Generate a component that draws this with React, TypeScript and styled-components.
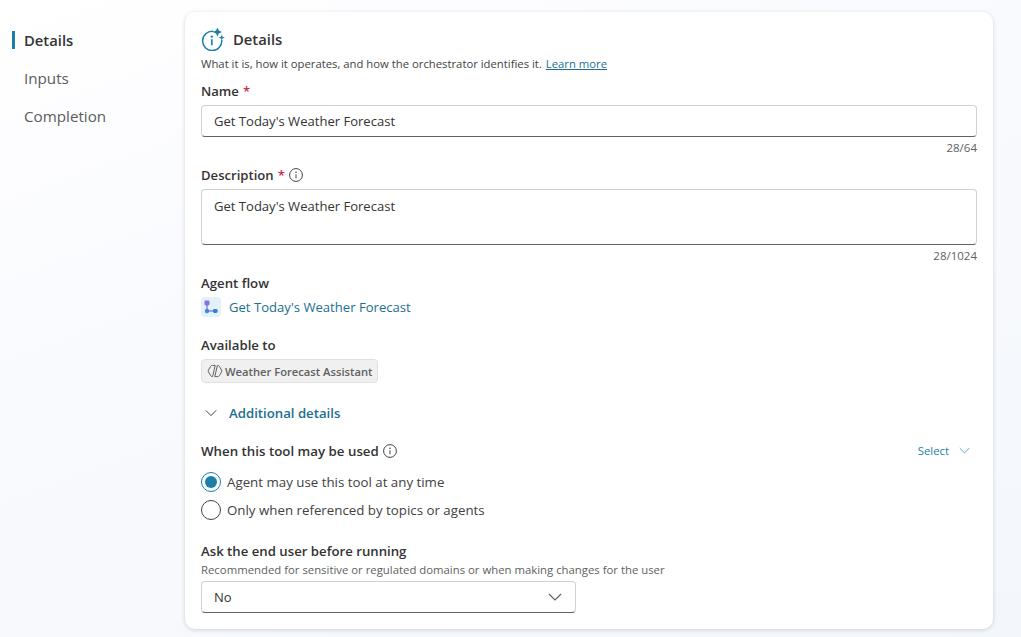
import { FC, ReactNode } from "react";
import styled, { createGlobalStyle } from "styled-components";

const GlobalStyle = createGlobalStyle`
	html, body {
		margin: 0;
		height: 100%;
	}
	body {
		font-family: "Open Sans", "Noto Sans", sans-serif;
		color: #242424;
		overflow: hidden;
	}
`;

const ChevronDown: FC<{ size?: number; color?: string }> = ({ size = 12, color = "#424242" }) => (
	<svg width={size} height={size} viewBox="0 0 12 12" fill="none">
		<path d="M0.8 3.4 L6 8.6 L11.2 3.4" stroke={color} strokeWidth="1" />
	</svg>
);

const InfoIcon: FC = () => (
	<svg width="14" height="14" viewBox="0 0 14 14" fill="none">
		<circle cx="7" cy="7" r="6.4" stroke="#424242" strokeWidth="1" />
		<circle cx="7" cy="4.3" r="0.8" fill="#424242" />
		<path d="M7 6.3 V10.2" stroke="#424242" strokeWidth="1" />
	</svg>
);

const SparkInfoIcon: FC = () => (
	<svg width="24" height="24" viewBox="0 0 24 24" fill="none">
		<path
			d="M12 4.4 A9.6 9.6 0 1 0 20.8 13.4"
			stroke="#1f7fa8"
			strokeWidth="1.5"
			strokeLinecap="round"
		/>
		<circle cx="10.8" cy="9.6" r="1.2" fill="#1f7fa8" />
		<path d="M10.8 12.2 V18.2" stroke="#1f7fa8" strokeWidth="1.7" />
		<path d="M16.4 0.4 L17.8 3.6 L21 5 L17.8 6.4 L16.4 9.6 L15 6.4 L11.8 5 L15 3.6 Z" fill="#1f7fa8" />
		<path d="M20.8 7.6 L21.6 9.7 L23.8 10.6 L21.6 11.4 L20.8 13.6 L20 11.4 L17.8 10.6 L20 9.7 Z" fill="#1f7fa8" />
	</svg>
);

const FlowIcon: FC = () => (
	<svg width="20" height="20" viewBox="0 0 20 20" fill="none">
		<rect width="20" height="20" rx="4" fill="#e3f1fb" />
		<path d="M6 6 V14 H14" stroke="#6d8ee6" strokeWidth="1.4" />
		<rect x="3.5" y="3.5" width="5" height="5" rx="1.4" fill="#8e6fe0" />
		<circle cx="6" cy="14" r="2.2" fill="#4a82e0" />
		<rect x="12" y="12" width="4.6" height="4" rx="1.4" fill="#3a78d8" />
	</svg>
);

const AgentIcon: FC = () => (
	<svg width="16" height="16" viewBox="0 0 16 16" fill="none">
		<path
			d="M8.2 2.4 H5.4 Q4.2 2.4 3.6 3.4 L1.4 7.2 Q1 8 1.4 8.8 L3.6 12.6 Q4.2 13.6 5.4 13.6 H5.6 Z"
			stroke="#616161"
			strokeWidth="1"
		/>
		<path
			d="M7.8 13.6 H10.6 Q11.8 13.6 12.4 12.6 L14.6 8.8 Q15 8 14.6 7.2 L12.4 3.4 Q11.8 2.4 10.6 2.4 H10.4 Z"
			stroke="#616161"
			strokeWidth="1"
		/>
	</svg>
);

const Field: FC<{ label: string; required?: boolean; info?: boolean; counter: string; children: ReactNode }> = ({
	label,
	required,
	info,
	counter,
	children,
}) => (
	<>
		<SLabel>
			{label}
			{required && <SRequired>*</SRequired>}
			{info && <InfoIcon />}
		</SLabel>
		{children}
		<SCounter>{counter}</SCounter>
	</>
);

const Radio: FC<{ checked?: boolean; children: ReactNode }> = ({ checked, children }) => (
	<SRadioRow>
		<SRadioCircle $checked={checked}>{checked && <SRadioDot />}</SRadioCircle>
		{children}
	</SRadioRow>
);

export default function App() {
	return (
		<SPage>
			<GlobalStyle />
			<SNav>
				<SNavItem $active>Details</SNavItem>
				<SNavItem>Inputs</SNavItem>
				<SNavItem>Completion</SNavItem>
			</SNav>
			<SCard>
				<SCardTitle>
					<SparkInfoIcon />
					Details
				</SCardTitle>
				<SCardSubtitle>
					What it is, how it operates, and how the orchestrator identifies it. <SLearnMore>Learn more</SLearnMore>
				</SCardSubtitle>

				<Field label="Name" required counter="28/64">
					<SInput>Get Today's Weather Forecast</SInput>
				</Field>

				<Field label="Description" required info counter="28/1024">
					<STextarea>Get Today's Weather Forecast</STextarea>
				</Field>

				<SSectionLabel>Agent flow</SSectionLabel>
				<SFlowLink>
					<FlowIcon />
					Get Today's Weather Forecast
				</SFlowLink>

				<SAvailableLabel>Available to</SAvailableLabel>
				<STag>
					<AgentIcon />
					Weather Forecast Assistant
				</STag>

				<SAccordion>
					<SAccordionIcon>
						<ChevronDown />
					</SAccordionIcon>
					Additional details
				</SAccordion>

				<SWhenRow>
					<SWhenLabel>
						When this tool may be used
						<InfoIcon />
					</SWhenLabel>
					<SSelectLink>
						Select
						<ChevronDown size={11} color="#5a9fc0" />
					</SSelectLink>
				</SWhenRow>
				<SRadioGroup>
					<Radio checked>Agent may use this tool at any time</Radio>
					<Radio>Only when referenced by topics or agents</Radio>
				</SRadioGroup>

				<SAskLabel>Ask the end user before running</SAskLabel>
				<SHint>Recommended for sensitive or regulated domains or when making changes for the user</SHint>
				<SDropdown>
					No
					<SDropdownIcon>
						<ChevronDown size={14} color="#616161" />
					</SDropdownIcon>
				</SDropdown>
			</SCard>
		</SPage>
	);
}

const SPage = styled.div`
	display: flex;
	align-items: flex-start;
	box-sizing: border-box;
	width: 1021px;
	height: 637px;
	padding-top: 12px;
	overflow: hidden;
	background: linear-gradient(160deg, #ffffff 0%, #f9fafe 40%, #f3f7fb 100%);
`;

const SNav = styled.nav`
	display: flex;
	flex-direction: column;
	gap: 10px;
	flex: none;
	width: 185px;
	padding: 14px 0 0 12px;
	box-sizing: border-box;
`;

const SNavItem = styled.div<{ $active?: boolean }>`
	display: flex;
	align-items: center;
	height: 28px;
	padding-left: ${({ $active }) => ($active ? "9px" : "12px")};
	border-left: ${({ $active }) => ($active ? "3px solid #1b7fa9" : "none")};
	font-size: ${({ $active }) => ($active ? "14.8px" : "15.2px")};
	font-weight: ${({ $active }) => ($active ? 600 : 400)};
	color: ${({ $active }) => ($active ? "#333333" : "#5c5c5c")};
	${({ $active }) => $active && "height: 18px; margin: 5px 0;"}
`;

const SCard = styled.main`
	flex: none;
	box-sizing: border-box;
	width: 808px;
	height: 617px;
	padding: 15px 16px 0;
	background: #ffffff;
	border-radius: 10px;
	box-shadow: 0 1px 4px rgba(0, 0, 0, 0.16);
`;

const SCardTitle = styled.div`
	display: flex;
	align-items: center;
	gap: 8px;
	height: 24px;
	font-size: 14.8px;
	line-height: 22px;
	font-weight: 600;
	color: #333333;
`;

const SCardSubtitle = styled.div`
	margin-top: 5px;
	font-size: 11.3px;
	line-height: 16px;
	color: #424242;
`;

const SLearnMore = styled.span`
	margin-left: 1px;
	color: #1b6f8f;
	text-decoration: underline;
`;

const SLabel = styled.div`
	display: flex;
	align-items: center;
	height: 20px;
	margin-top: 9px;
	font-size: 13.1px;
	font-weight: 600;
	color: #333333;

	svg {
		margin-left: 4px;
	}
`;

const SRequired = styled.span`
	margin-left: 4px;
	color: #c4314b;
	font-weight: 600;
`;

const SInput = styled.div`
	box-sizing: border-box;
	display: flex;
	align-items: center;
	height: 32px;
	margin-top: 4px;
	padding: 0 12px;
	background: #ffffff;
	border: 1px solid #d1d1d1;
	border-bottom-color: #616161;
	border-radius: 4px;
	font-size: 13.05px;
	color: #333333;
`;

const STextarea = styled(SInput)`
	align-items: flex-start;
	height: 56px;
	padding-top: 6px;
	line-height: 20px;
`;

const SCounter = styled.div`
	margin-top: 3px;
	height: 16px;
	text-align: right;
	font-size: 11.5px;
	line-height: 16px;
	color: #616161;
`;

const SSectionLabel = styled.div`
	margin-top: 9px;
	height: 20px;
	font-size: 13.2px;
	line-height: 20px;
	font-weight: 600;
	color: #333333;
`;

const SAvailableLabel = styled(SSectionLabel)`
	margin-top: 18px;
`;

const SFlowLink = styled.div`
	display: flex;
	align-items: center;
	gap: 8px;
	height: 20px;
	margin-top: 4px;
	font-size: 13.1px;
	color: #1b6f8f;
`;

const STag = styled.div`
	display: inline-flex;
	align-items: center;
	gap: 2px;
	box-sizing: border-box;
	height: 24px;
	margin-top: 4px;
	padding: 0 5px;
	background: #f0f0f0;
	border: 1px solid #e0e0e0;
	border-radius: 4px;
	font-size: 11.2px;
	font-weight: 600;
	color: #616161;
`;

const SAccordion = styled.div`
	display: flex;
	align-items: center;
	height: 20px;
	margin-top: 19px;
	font-size: 13.2px;
	font-weight: 600;
	color: #1b6f8f;
`;

const SAccordionIcon = styled.span`
	display: flex;
	width: 28px;
	padding-left: 4px;
	box-sizing: border-box;
`;

const SWhenRow = styled.div`
	display: flex;
	align-items: center;
	justify-content: space-between;
	height: 20px;
	margin-top: 18px;
`;

const SWhenLabel = styled.div`
	display: flex;
	align-items: center;
	gap: 4px;
	font-size: 13.3px;
	font-weight: 600;
	color: #333333;
`;

const SSelectLink = styled.div`
	display: flex;
	align-items: center;
	gap: 10px;
	padding-right: 7px;
	margin-top: -2px;
	font-size: 11.3px;
	color: #1b7fa9;
`;

const SRadioGroup = styled.div`
	display: flex;
	flex-direction: column;
	gap: 8px;
	margin-top: 11px;
`;

const SRadioRow = styled.div`
	display: flex;
	align-items: center;
	gap: 6px;
	height: 20px;
	font-size: 13.3px;
	color: #424242;
`;

const SRadioCircle = styled.span<{ $checked?: boolean }>`
	display: flex;
	align-items: center;
	justify-content: center;
	box-sizing: border-box;
	width: 20px;
	height: 20px;
	border-radius: 50%;
	border: 1px solid ${({ $checked }) => ($checked ? "#1b7fa9" : "#424242")};
`;

const SRadioDot = styled.span`
	width: 12px;
	height: 12px;
	border-radius: 50%;
	background: #1b7fa9;
`;

const SAskLabel = styled(SSectionLabel)`
	margin-top: 21px;
`;

const SHint = styled.div`
	height: 16px;
	margin-top: 1px;
	font-size: 11.35px;
	line-height: 16px;
	color: #616161;
`;

const SDropdown = styled(SInput)`
	justify-content: space-between;
	width: 375px;
	margin-top: 3px;
`;

const SDropdownIcon = styled.span`
	display: flex;
	margin-right: 1px;
`;
